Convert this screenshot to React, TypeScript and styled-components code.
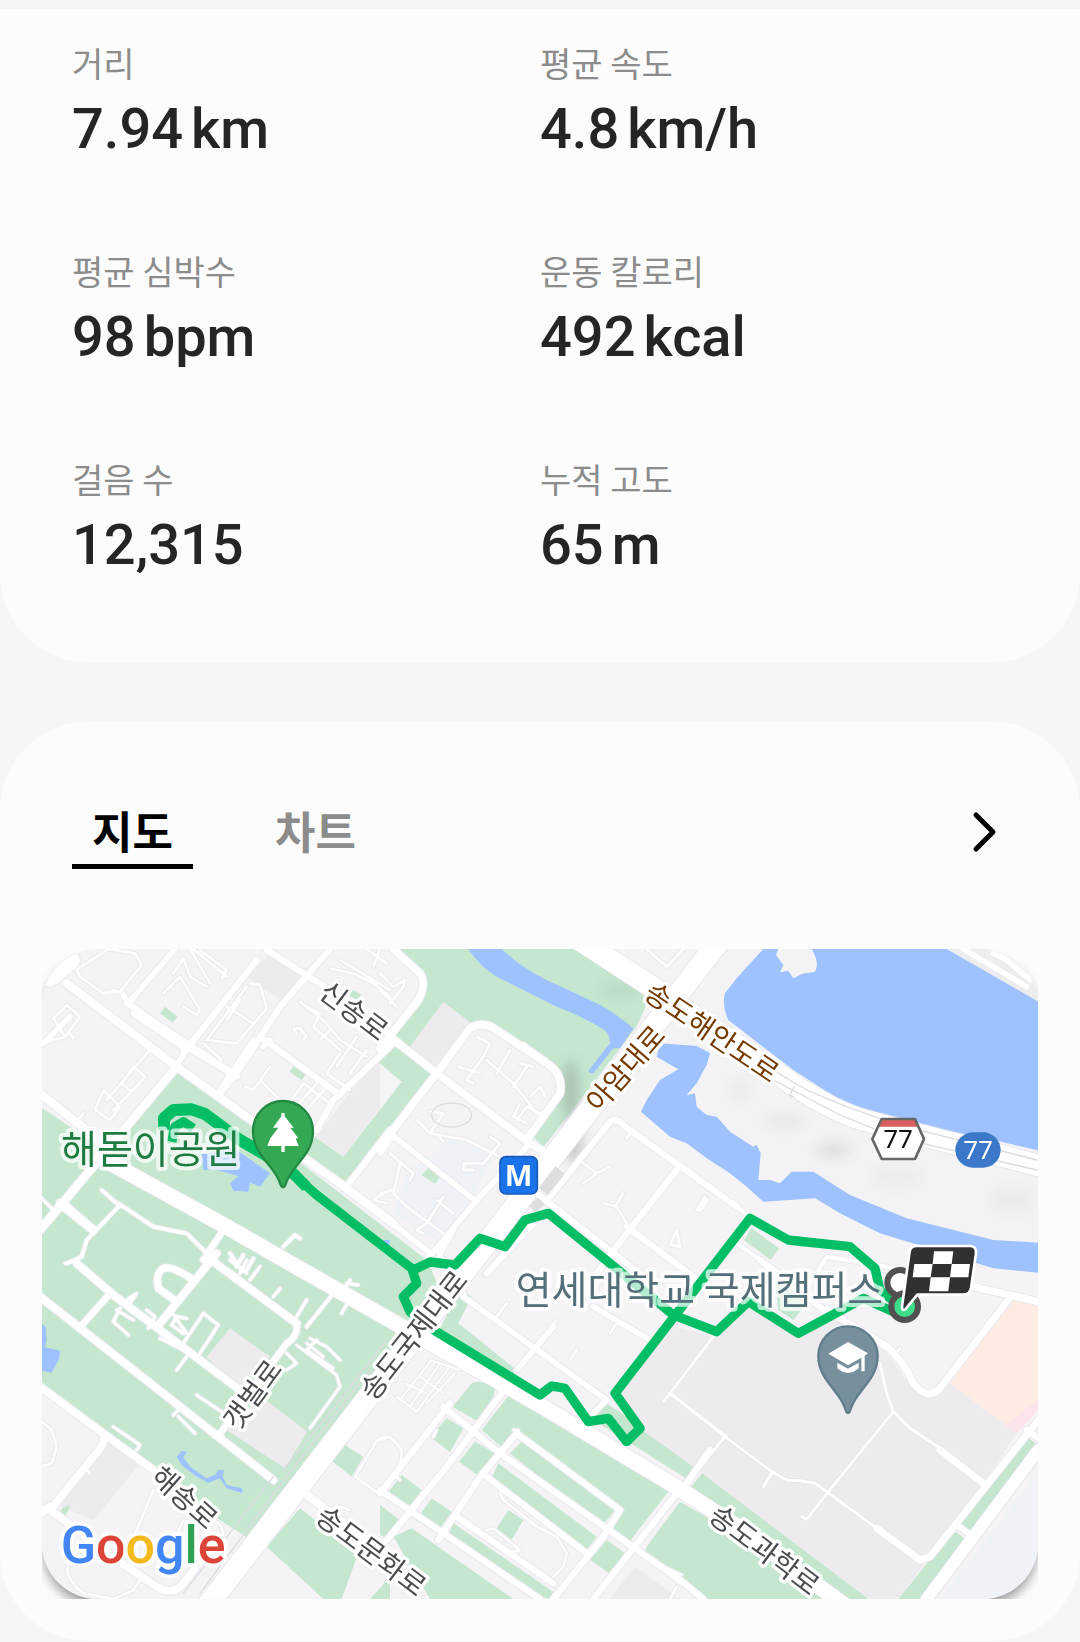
import React, { useState } from "react";
import styled, { createGlobalStyle } from "styled-components";

const KR = '"Noto Sans CJK KR", sans-serif';

const Global = createGlobalStyle`
  * { box-sizing: border-box; }
  body { margin: 0; background: #f6f6f6; font-family: ${KR}; }
`;

const Page = styled.main`
  display: flex;
  flex-direction: column;
  gap: 60px;
  padding: 9px 0 2px;
`;

const Card = styled.section<{ $open?: boolean }>`
  background: #fcfcfc;
  border-radius: ${(p) => (p.$open ? "0 0 88px 88px" : "88px")};
`;

const Metrics = styled.dl`
  display: grid;
  grid-template-columns: 1fr 1fr;
  row-gap: 90px;
  margin: 0;
  padding: 34px 72px 85px;
`;

const Metric = styled.div`
  display: flex;
  flex-direction: column;
  gap: 14px;
`;

const Label = styled.dt`
  color: #8c8c8c;
  font-size: 34px;
  line-height: 40px;
`;

const Value = styled.dd`
  display: flex;
  gap: 8px;
  margin: 0;
  color: #252525;
  font-family: Roboto, ${KR};
  font-size: 56px;
  font-weight: 500;
  line-height: 64px;
`;

const Header = styled.div`
  display: flex;
  align-items: flex-start;
  justify-content: space-between;
  padding: 80px 72px 80px;
`;

const Tabs = styled.div`
  display: flex;
  gap: 62px;
`;

const Tab = styled.button<{ $active: boolean }>`
  padding: 0 20px 6px;
  border: 0;
  border-bottom: 5px solid ${(p) => (p.$active ? "#000" : "transparent")};
  background: none;
  color: ${(p) => (p.$active ? "#000" : "#8c8c8c")};
  font-family: ${KR};
  font-size: 44px;
  font-weight: 700;
  line-height: 56px;
  cursor: pointer;
`;

const MoreButton = styled.button`
  display: flex;
  padding: 8px 8px 0;
  border: 0;
  background: none;
  color: #000;
  cursor: pointer;
`;

const MapFrame = styled.div`
  padding-bottom: 42px;
`;

const MapClip = styled.div`
  margin: 0 42px;
  overflow: hidden;
`;

const MapPanel = styled.div`
  overflow: hidden;
  border-radius: 56px;
  box-shadow: 0 8px 12px -2px rgba(0, 0, 0, 0.4);
`;

const MapSvg = styled.svg`
  display: block;
  width: 100%;
  height: auto;
  font-family: ${KR};
`;

const Street = styled.text<{ $major?: boolean }>`
  fill: ${(p) => (p.$major ? "#753a00" : "#4a4c50")};
  stroke: #fff;
  stroke-width: 20px;
  stroke-linejoin: round;
  paint-order: stroke;
  font-size: 84px;
  text-anchor: middle;
`;

const Place = styled.text`
  stroke: #fff;
  stroke-opacity: 0.7;
  stroke-width: 24px;
  stroke-linejoin: round;
  paint-order: stroke;
  font-size: 117px;
`;

const RouteNumber = styled.text`
  font-family: "Noto Sans", sans-serif;
  font-size: 78px;
  text-anchor: middle;
`;

const MetroLetter = styled.text`
  fill: #fff;
  font-family: "Open Sans", sans-serif;
  font-size: 88px;
  font-weight: 700;
  text-anchor: middle;
`;

const Logo = styled.text`
  stroke: #fff;
  stroke-opacity: 0.75;
  stroke-width: 24px;
  stroke-linejoin: round;
  paint-order: stroke;
  font-family: Roboto, sans-serif;
  font-size: 156px;
  font-weight: 500;
`;

const metrics = [
  { label: "거리", value: "7.94", unit: "km" },
  { label: "평균 속도", value: "4.8", unit: "km/h" },
  { label: "평균 심박수", value: "98", unit: "bpm" },
  { label: "운동 칼로리", value: "492", unit: "kcal" },
  { label: "걸음 수", value: "12,315" },
  { label: "누적 고도", value: "65", unit: "m" },
];

const PARK = "#c5e7cf";
const BLOCK = "#eeebee";
const WATER = "#9dc2ff";

/* The map is divided in six sectors, each with its own origin. */
const sectors: Record<string, [number, number]> = {
  nw: [0, 0],
  n: [1020, 0],
  ne: [1980, 0],
  sw: [0, 960],
  s: [1020, 960],
  se: [1980, 960],
};
const shift = (s: string) => `translate(${sectors[s][0]} ${sectors[s][1]})`;

type Area = [string, string, string];
const areas: Area[] = [
  ["nw", PARK, "M405 395L440 405 1160 960 1210 1070 740 1640 625 1795 540 1740 330 1590 0 1335V500L180 620Z"],
  ["nw", PARK, "M375 200L412 230 398 248 360 220ZM765 375L800 400 785 420 748 395ZM940 150L965 165 950 180 925 165Z"],
  ["nw", PARK, "M1050 310L1005 365 1085 425 910 650 825 590 785 650 920 740 1050 600 1200 410Z"],
  ["nw", BLOCK, "M690 40L800 115 735 190 620 110ZM1005 360L1083 425 910 647 828 590Z"],
  ["n", PARK, "M60 27H600L810 170 770 260 640 430 490 622 460 590 545 450 520 390 340 265 270 260 170 395 30 300 130 150V110Z"],
  ["n", PARK, "M0 320L30 300 170 400 30 570 0 612Z"],
  ["n", BLOCK, "M90 320L190 185 280 255 175 390Z"],
  ["n", "#f5f5f6", "M0 370L65 425 0 510Z"],
  ["n", PARK, "M148 680L182 706 165 732 125 705Z"],
  ["n", WATER, "M265 27H365Q420 80 500 120L650 190Q700 215 760 265L720 325 700 325 640 400Q630 402 625 392L690 310Q690 280 670 268 600 225 530 200L350 110Q300 80 265 27Z"],
  ["n", WATER, "M840 310L950 318 990 340 980 375 950 430 920 465 945 460 950 500 980 525 1010 530 1050 575 1120 620 1130 615 1142 640 1135 720 1170 720 1200 730 1235 695 1300 695 1410 765 1580 835 1840 900 1975 908V998L1840 985 1500 880 1460 860 1380 820 1305 775 1150 785 1100 740 1050 700 980 655 920 610 870 590 783 515 800 480 840 420 895 388 830 350Z"],
  ["ne", WATER, "M190 27H740L1015 185V632L860 595 680 560 520 520 420 480 280 390 85 240Q65 200 75 160L110 115Z"],
  ["ne", "#f3f2f4", "M235 27H335Q360 70 345 95L305 102 280 115 265 92 240 97 250 75 228 45Z"],
  ["nw", WATER, "M485 640L590 630 690 700 660 740 630 728 625 755 580 752 570 730 595 708 530 690 490 690ZM1020 900L1050 900 1048 918Z"],
  ["sw", WATER, "M0 190L18 200 20 240 15 262 60 272 58 295 35 338 0 330Z"],
  ["sw", WATER, "M410 590L425 572 442 575 430 592 450 620 500 655 525 645 535 630 552 630 548 650 560 675 605 685 608 700 560 685 540 655 505 668 470 650 425 615Z"],
  ["sw", BLOCK, "M500 290L570 205 690 290 590 385ZM560 510L660 410 690 430 802 515 735 625ZM200 540L310 600 160 780 60 740Z"],
  ["sw", PARK, "M915 555L970 590 935 650 875 602ZM680 860L780 745 955 880 905 1017H850ZM990 1017L1050 950V1017Z M60 750L85 735 90 745 75 768Z"],
  ["s", PARK, "M240 90L275 110 235 190 410 330 400 345 180 205Z"],
  ["s", PARK, "M275 370Q300 355 345 385L340 410 290 482 218 440ZM200 475L250 505 210 577 150 530ZM285 545L345 580 300 650 237 605ZM65 645L125 690 85 745 22 700ZM155 715L215 755 170 820 108 780ZM0 735L60 780 20 835 0 825Z"],
  ["s", PARK, "M385 408L865 695 740 855 690 805 735 750 420 520 375 570 305 510ZM430 540L705 750 665 800 390 580ZM355 610L650 830 612 880 335 655Z"],
  ["s", PARK, "M220 790L520 995 505 1017 490 1010 200 840ZM95 805L400 1017H150L40 830ZM385 750L430 780 395 840 350 805ZM680 840L735 880 695 945 630 900Z"],
  ["s", PARK, "M900 725L960 760 1380 1017H970L790 890 800 860ZM680 430L945 612 918 655 640 480ZM970 635L1500 1017H1400L933 680Z"],
  ["s", BLOCK, "M765 920L900 1017H690Z"],
  ["se", BLOCK, "M-80 200L-260 400-175 510-20 620 505 1017H595L850 670 950 520 750 370 690 410 640 390 570 290 430 160 300 225 150 130 45 230Z"],
  ["se", "#fdebe4", "M930 120L1015 140V440L950 520 750 370Z"],
  ["se", "#fce4ea", "M1015 420V450L950 520 915 495Z"],
  ["se", PARK, "M980 530L1015 555 820 815 780 790ZM1000 500L1015 480V510ZM760 810L800 840 665 1017H595ZM225 60L320 130 280 180 235 150Z"],
  ["ne", PARK, "M155 865L237 925 212 960 132 900Z"],
];

type Road = [string, number, string];
const roads: Road[] = [
  /* alleys */
  ["nw", 9, "M205 27L110 90 120 110 190 160 240 155 305 75 285 40ZM190 160L220 150 250 160M460 27L560 110M400 100L430 55 450 110 500 140M480 30L560 90 545 115M510 130L450 27M370 160L420 110 480 210 470 225 430 200"],
  ["nw", 9, "M80 195L120 230 75 290 40 235ZM75 290L10 310M90 280L100 295M280 380L315 410 275 455 245 430ZM275 455L220 510M330 330L200 480M190 450L240 500 210 540 165 510ZM130 520L100 560"],
  ["nw", 9, "M630 130L660 135 680 205 590 310 500 300 620 140M560 200L640 250M490 310L545 360M600 180L560 240M780 185L860 250 900 300 980 350M770 280Q750 260 780 265L800 290 790 300M800 200L840 220 820 260 900 330M950 290L890 380M980 330L930 400M900 340L860 400 930 450M870 270L840 300"],
  ["nw", 9, "M690 380L640 450 615 440M660 420L720 480M830 430L770 500M860 440L800 510M740 500L790 430 870 490M1050 750L1000 780 1040 790M870 85L940 100 1000 130 1050 170M900 60L1050 150M980 27L1040 70M1020 27L1000 80"],
  ["nw", 12, "M185 750L230 790M235 790L340 860 440 880 520 960M235 800L140 900 125 950 80 970M730 920L765 885 780 895M570 940L600 985M610 945L590 980M640 955L620 990"],
  ["n", 9, "M290 290L330 310 310 350 260 420 280 430M235 380L300 400M390 330L350 400M320 360L400 430 470 520M440 380L400 440M460 380L420 370M410 540L440 500 480 520M420 490L400 530 440 550M450 470L480 440 495 470M430 310L500 360 490 370"],
  ["n", 9, "M110 540L150 580 260 600 360 650M150 580L190 520 150 515M180 595L190 605M330 590L360 610 310 670 250 670 250 690 280 690M30 640L100 700 90 720M60 670L40 760 80 800 190 880M170 780L220 820M190 770L140 850 110 870 130 880M0 760L40 750M0 100L40 140 75 120 70 140 30 190M0 150L50 200"],
  ["n", 9, "M610 670L650 700 610 730M650 700L690 680M670 790L710 800 740 850M730 760L705 800M975 770L950 810 975 790ZM890 870L870 915 900 920ZM740 595L750 580"],
  ["n", 9, "M800 27L860 80 910 27M680 27L790 110 770 130 620 30"],
  ["sw", 10, "M75 10L110 0M260 120L290 100 270 130M230 150L280 180M265 225L220 185 240 145M320 150L345 170 325 205M360 235L470 290M440 290L410 330M430 250L490 160 535 195 480 280M430 220L395 195 410 170 440 175M390 150L440 220"],
  ["sw", 10, "M470 405L560 465M400 465L420 445M415 470L465 520M220 500L300 555 290 570M570 0L620 40M660 20L630 60M620 0L600 40M720 85L700 110M800 120L770 170M930 60L910 90M905 160L925 125M920 70L955 75"],
  ["sw", 9, "M810 235L860 260 900 300M770 255L890 345 900 380 810 505M800 250L850 290M830 240L800 270 880 325M740 280L770 310 740 330"],
  ["sw", 9, "M0 480L35 510 50 560 35 610 0 620M340 690L290 810 240 900M430 780L400 850M85 910Q70 950 130 1000L220 1017 280 990 300 960M520 780Q560 800 545 840L480 920M140 630L150 640M1040 530Q1010 530 1000 560L945 650 1015 700M900 740L930 750"],
  ["s", 7, "M155 300L60 420M180 310L90 440M205 325L110 455M225 340L140 430M150 300L240 330M75 370L140 400M50 410L110 455M120 350L190 400"],
  ["s", 9, "M0 540L30 530 65 570 60 620M160 530L170 510M50 650L60 660M320 810L340 805 420 870 400 875M360 700L370 720 470 800 530 830 560 880 550 920 520 950M400 510L415 510"],
  ["s", 9, "M380 130L350 170M530 180L510 200M710 190L690 220M590 270L570 300M870 400L850 425M870 400L1040 530M850 930L860 925 905 945M870 1017L890 980"],
  ["se", 9, "M40 230L-90 400 75 530 215 635 260 660 300 662 345 670 380 695 530 805M75 530L10 610M215 640L190 680M580 455L385 695 320 778 305 770M540 310L560 400 580 455 630 505 720 565M600 265L585 285"],
  ["nw", 10, "M0 770L50 820M80 790L160 860"],
  /* streets */
  ["nw", 18, "M405 27L265 190 250 165M280 220L440 330M260 190L580 400M440 330L400 390M640 300L540 450M10 310L90 230M690 300L670 320"],
  ["nw", 20, "M870 27L720 200 590 400 530 470M650 60L430 340M1060 310L880 480 830 570M680 30L870 150 1050 285M660 290L900 465M1050 570L915 745 "],
  ["nw", 20, "M550 870L490 960M270 195L440 320 590 410"],
  ["n", 24, "M40 27L120 100Q140 130 115 180L0 325M30 290L170 400 450 610 500 640M170 400L270 265Q310 240 350 270L500 370Q550 400 540 460L440 600M170 400L0 620"],
  ["n", 18, "M30 580L290 785M450 610L290 780 140 960M30 600L0 640M0 820L150 940M220 870L180 940"],
  ["n", 20, "M510 770L690 545Q710 530 735 560L1070 800M470 760L800 1017M890 690L740 880 650 1000M740 860L950 1017M320 1000L460 850"],
  ["ne", 14, "M0 720L150 830M110 910L240 1000M20 780L0 810M350 1000L380 950 620 990"],
  ["sw", 24, "M0 110L700 660M0 380L190 520 340 630M110 10L220 105 600 390M530 -20L360 190M500 -10L770 190M190 520Q200 550 160 590L30 750M30 750L260 920 350 980Q400 1010 430 970L530 840"],
  ["sw", 20, "M770 190Q775 230 740 250L540 520M210 100L130 190"],
  ["sw", 12, "M880 100L800 200"],
  ["sw", 22, "M410 125L355 85Q345 40 370 25 395 15 460 60"],
  ["sw", 26, "M780 690L1100 930M0 760L30 740"],
  ["s", 20, "M210 430L0 700M380 380L200 620 20 840M410 520L300 650 175 840M190 440L360 580 900 960 970 1017M0 690L480 1017M410 520L720 750 670 830 520 1017M320 650L620 880M230 770L520 970M890 700L740 890 640 1017M990 570L920 670"],
  ["s", 18, "M250 110L680 420M520 200L410 330M640 140L810 240M680 420L640 460M670 0L880 160M180 -10L250 100"],
  ["se", 22, "M380 150L560 260Q610 300 640 370 680 420 715 390L925 120M820 80L1015 125M850 670L720 570M530 805L660 900 690 890 1015 480"],
  ["se", 18, "M180 0L250 60 400 170M980 510L1015 535M770 795L820 830"],
  /* avenues */
  ["nw", 26, "M80 130L410 380 920 745 1060 850M410 380L0 870M0 460L190 610M60 790L160 870"],
  ["nw", 60, "M30 110L90 60"],
  ["se", 36, "M1015 570L680 1017"],
  ["nw", 46, "M185 655L560 860 760 975 1050 1140 1500 1395 1900 1635 2070 1745 2420 2000"],
  ["nw", 64, "M2040 0L500 2000"],
  ["n", 64, "M600 0L830 150 960 240 1150 370Q1320 500 1450 540L1990 680"],
];

const rails = [
  "M700 650L430 1000M730 630L900 420 1040 240",
  "M480 1000L740 650 990 330",
];

const route = "M700 650L830 765 1115 985 1130 1030 1090 1070 1110 1115 1190 1175 1500 1365 1535 1338 1575 1345 1645 1445 1705 1435 1760 1505 1800 1465 1725 1360 2130 835 2245 900 2430 920 2505 985 2520 1050 2580 1100";
const branch = "M1115 992L1170 966 1245 975 1320 895 1395 920 1455 840 1525 820 1710 970 1900 1125 2030 1175 2125 1085 2275 1180 2470 1075 2560 1115";

const streets: { name: string; x: number; y: number; r: number; major?: boolean }[] = [
  { name: "신송로", x: 942, y: 212, r: 37 },
  { name: "송도해안도로", x: 2016, y: 276, r: 34, major: true },
  { name: "아암대로", x: 1756, y: 385, r: -49, major: true },
  { name: "송도국제대로", x: 1120, y: 1185, r: -52 },
  { name: "갯벌로", x: 637, y: 1363, r: -54 },
  { name: "해송로", x: 434, y: 1672, r: 42 },
  { name: "송도문화로", x: 994, y: 1832, r: 37 },
  { name: "송도과학로", x: 2174, y: 1829, r: 37 },
];

const logoLetters = [
  ["G", "#4285f4"],
  ["o", "#db4437"],
  ["o", "#f4b91a"],
  ["g", "#4285f4"],
  ["l", "#2fa352"],
  ["e", "#db4437"],
];

function RouteMap() {
  return (
    <MapSvg viewBox="6 27 2988 1950" role="img" aria-label="지도">
      <defs>
        <filter id="soft" x="-50%" y="-50%" width="200%" height="200%">
          <feGaussianBlur stdDeviation="18" />
        </filter>
      </defs>
      <rect width="3000" height="2000" fill="#f6f3f7" />
      <path d="M1900 300L2060 20 2200 20 2080 230 2500 540 2994 700V960L2600 860 2260 700 2150 720 2000 520Z" fill="#f3f3f5" />
      <path d="M2700 27H2850L2994 140V210Z" fill="#ededf0" />
      <g fill="#eff2f7">
        <path d="M1380 620L1250 850 1180 900 1060 820 1100 700 1230 600Z" />
        <path d="M2994 1600L2700 1977H2890L2994 1900Z" />
      </g>
      {areas.map(([s, fill, d], i) => (
        <path key={i} d={d} fill={fill} transform={shift(s)} />
      ))}
      <g fill="#8f9792" opacity="0.45" filter="url(#soft)">
        <ellipse cx="1592" cy="450" rx="26" ry="90" />
        <ellipse cx="1600" cy="600" rx="28" ry="70" />
        <ellipse cx="1740" cy="150" rx="60" ry="18" opacity="0.4" />
        <ellipse cx="2380" cy="630" rx="55" ry="22" opacity="0.45" />
        <ellipse cx="2235" cy="545" rx="60" ry="20" opacity="0.25" />
        <ellipse cx="2570" cy="710" rx="80" ry="34" opacity="0.12" />
        <ellipse cx="2100" cy="450" rx="30" ry="30" opacity="0.2" />
        <ellipse cx="2920" cy="780" rx="70" ry="40" opacity="0.15" />
      </g>
      <g fill="none" strokeLinejoin="round" strokeLinecap="round">
        {roads.map(([s, w, d], i) => (
          <path key={i} d={d} stroke="#e3e1ea" strokeWidth={w + 4} transform={shift(s)} />
        ))}
        {roads.map(([s, w, d], i) => (
          <path key={i} d={d} stroke="#fff" strokeWidth={w} transform={shift(s)} />
        ))}
        <g stroke="#dcdbe2" strokeWidth="4">
          {rails.map((d) => (
            <path key={d} d={d} transform={shift("sw")} />
          ))}
          <path d="M2190 385L2300 450 2420 500 2560 550 2990 660M2200 420L2400 525 2560 590 2990 690M2260 470L2250 465 2262 440" />
          <path d="M2860 40L2900 60 2970 120M2770 27L2960 140" stroke="#fff" strokeWidth="16" />
          <ellipse cx="1235" cy="525" rx="60" ry="36" />
        </g>
        <path d="M1510 755L1560 690M1480 785L1500 805" stroke="#dedde0" strokeWidth="36" strokeLinecap="butt" />
      </g>
      <g fill="none" stroke="#04be65" strokeLinejoin="round">
        <path d={route} strokeWidth="28" />
        <path d={branch} strokeWidth="28" />
        <path d="M372 570V535L400 510 455 508 495 522 600 600 720 670" strokeWidth="36" />
        <path d="M395 605L405 560 430 545 460 565" strokeWidth="28" />
        <path d="M640 620L740 680 800 741" strokeWidth="34" />
      </g>

      <Place x="63" y="668" fill="#1e7b41">해돋이공원</Place>
      <Place x="1427" y="1093" fill="#546e7a">연세대학교 국제캠퍼스</Place>
      {streets.map((s) => (
        <Street key={s.name} $major={s.major} dy="0.37em" transform={`translate(${s.x} ${s.y}) rotate(${s.r})`}>
          {s.name}
        </Street>
      ))}

      <path d="M639 573a90 90 0 0 1 180 0c0 75-68 105-82 160q-8 18-16 0c-14-55-82-85-82-160z" fill="#34a853" stroke="#218a42" strokeWidth="7" />
      <path d="M724 519h10v10l27 34h-10l24 32h-8l9 23h-42v18h-10v-18h-42l9-23 24-32h-16l25-34z" fill="#fff" />

      <g transform={shift("n")}>
        <rect x="360" y="650" width="112" height="112" rx="18" fill="#1a73e8" stroke="#185abc" strokeWidth="5" />
        <MetroLetter x="416" y="738">M</MetroLetter>
      </g>

      <g transform={shift("ne")}>
        <path d="M545 537H645L672 597 645 657H545L517 597Z" fill="#fff" />
        <path d="M545 537H645L655 560H535Z" fill="#d95f5f" />
        <path d="M545 537H645L672 597 645 657H545L517 597Z" fill="none" stroke="#666" strokeWidth="8" strokeLinejoin="round" />
        <RouteNumber x="594" y="624" fill="#111">77</RouteNumber>
        <rect x="766" y="577" width="136" height="106" rx="53" fill="#3b78c9" />
        <RouteNumber x="834" y="658" fill="#fff">77</RouteNumber>
      </g>

      <g transform={shift("se")}>
        <path d="M355 288a89 89 0 0 1 178 0c0 75-68 105-82 162q-7 18-14 0c-14-57-82-87-82-162z" fill="#78909c" stroke="#607d8b" strokeWidth="7" />
        <path d="M444 246L504 280 494 287V334H484V293L444 316 385 281Z" fill="#fff" />
        <path d="M412 308L444 326 476 308V325Q444 353 412 325Z" fill="#fff" />
        <circle cx="600" cy="68" r="38" fill="#fff" stroke="#505050" strokeWidth="18" />
        <circle cx="614" cy="140" r="40" fill="#3fdc89" stroke="#505050" strokeWidth="18" />
        <path d="M648-42H808Q830-42 828-20L813 85Q809 104 790 104H652L616 148Q606 154 606 140L628-20Q630-42 648-42Z" fill="#303030" stroke="#fff" strokeWidth="8" strokeLinejoin="round" />
        <path d="M702-26H760L755 12H698ZM643 12H698L692 52H638ZM755 12H810L805 52H750ZM692 52H750L745 94H687Z" fill="#fff" />
      </g>

      <Logo x="62" y="1868">
        {logoLetters.map(([letter, fill], i) => (
          <tspan key={i} fill={fill}>{letter}</tspan>
        ))}
      </Logo>
    </MapSvg>
  );
}

export default function App() {
  const [tab, setTab] = useState("지도");
  return (
    <Page>
      <Global />
      <Card $open>
        <Metrics>
          {metrics.map((m) => (
            <Metric key={m.label}>
              <Label>{m.label}</Label>
              <Value>
                <span>{m.value}</span>
                {m.unit && <span>{m.unit}</span>}
              </Value>
            </Metric>
          ))}
        </Metrics>
      </Card>
      <Card>
        <Header>
          <Tabs role="tablist">
            {["지도", "차트"].map((name) => (
              <Tab key={name} role="tab" aria-selected={tab === name} $active={tab === name} onClick={() => setTab(name)}>
                {name}
              </Tab>
            ))}
          </Tabs>
          <MoreButton aria-label="자세히">
            <svg width="32" height="44" viewBox="0 0 32 44" fill="none" stroke="currentColor" strokeWidth="5" strokeLinecap="round" strokeLinejoin="round">
              <path d="M8 5L25 22 8 39" />
            </svg>
          </MoreButton>
        </Header>
        <MapFrame>
          <MapClip>
            <MapPanel>
              <RouteMap />
            </MapPanel>
          </MapClip>
        </MapFrame>
      </Card>
    </Page>
  );
}
